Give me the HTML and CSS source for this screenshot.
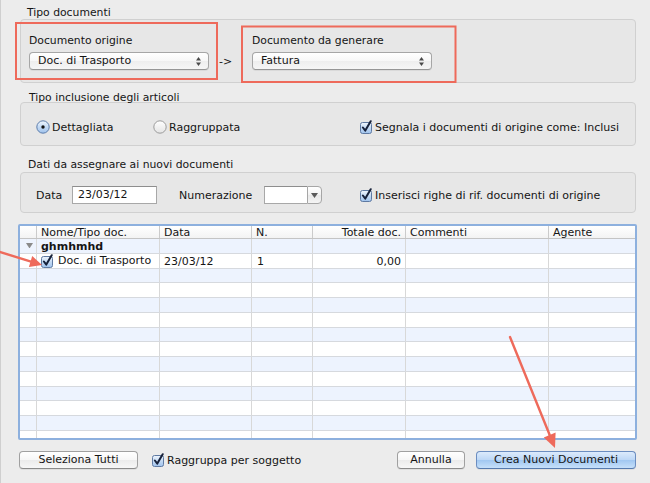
FILE: index.html
```html
<!DOCTYPE html>
<html lang="it">
<head>
<meta charset="utf-8">
<title>Genera documenti</title>
<link rel="stylesheet" href="styles.css">
</head>
<body>
<svg class="defs" aria-hidden="true">
  <defs>
    <linearGradient id="gBlue" x1="0" y1="0" x2="0" y2="1">
      <stop offset="0" stop-color="#f0f6fd"/>
      <stop offset="0.5" stop-color="#c4daf4"/>
      <stop offset="1" stop-color="#9fc2ec"/>
    </linearGradient>
    <linearGradient id="gWhite" x1="0" y1="0" x2="0" y2="1">
      <stop offset="0" stop-color="#ffffff"/>
      <stop offset="1" stop-color="#e4e4e4"/>
    </linearGradient>
    <symbol id="cb" viewBox="0 0 14 14">
      <rect x="1.5" y="2.5" width="11" height="11" rx="2" fill="url(#gBlue)" stroke="#5f7aa2"/>
      <path d="M3.9 7.5 L6.3 10.6 L11.7 1.2" fill="none" stroke="#16213a" stroke-width="2" stroke-linecap="round" stroke-linejoin="round"/>
    </symbol>
    <symbol id="radOn" viewBox="0 0 14 14">
      <circle cx="7" cy="7" r="6.2" fill="url(#gBlue)" stroke="#5d7dab"/>
      <circle cx="7" cy="7" r="1.7" fill="#111"/>
    </symbol>
    <symbol id="radOff" viewBox="0 0 14 14">
      <circle cx="7" cy="7" r="6.2" fill="url(#gWhite)" stroke="#9b9b9b"/>
    </symbol>
    <symbol id="updown" viewBox="0 0 5 9">
      <polygon points="0,3.5 2.5,0 5,3.5" fill="#4a4a4a"/>
      <polygon points="0,5.5 2.5,9 5,5.5" fill="#4a4a4a"/>
    </symbol>
  </defs>
</svg>

<div class="window">
  <div class="legend l1">Tipo documenti</div>
  <div class="group g1">
    <div class="field">
      <div class="flabel">Documento origine</div>
      <div class="popup"><span>Doc. di Trasporto</span><svg class="ud" width="5" height="9"><use href="#updown"/></svg></div>
    </div>
    <div class="arrowtxt">-&gt;</div>
    <div class="field">
      <div class="flabel">Documento da generare</div>
      <div class="popup"><span>Fattura</span><svg class="ud" width="5" height="9"><use href="#updown"/></svg></div>
    </div>
  </div>

  <div class="legend l2">Tipo inclusione degli articoli</div>
  <div class="group g2">
    <div class="opt opt1"><svg class="ico" width="14" height="14"><use href="#radOn"/></svg><span>Dettagliata</span></div>
    <div class="opt opt2"><svg class="ico" width="14" height="14"><use href="#radOff"/></svg><span>Raggruppata</span></div>
    <div class="opt"><svg class="ico" width="14" height="14"><use href="#cb"/></svg><span>Segnala i documenti di origine come: Inclusi</span></div>
  </div>

  <div class="legend l3">Dati da assegnare ai nuovi documenti</div>
  <div class="group g3">
    <span class="lbl-data">Data</span>
    <div class="input date">23/03/12</div>
    <span class="lbl-num">Numerazione</span>
    <div class="combo"><div class="combo-field"></div><div class="combo-btn"><svg width="7" height="5"><polygon points="0,0 7,0 3.5,5" fill="#5a5a5a"/></svg></div></div>
    <div class="opt opt-ins"><svg class="ico" width="14" height="14"><use href="#cb"/></svg><span>Inserisci righe di rif. documenti di origine</span></div>
  </div>

  <div class="tbl">
    <div class="row thead">
      <div class="c"></div>
      <div class="c">Nome/Tipo doc.</div>
      <div class="c">Data</div>
      <div class="c">N.</div>
      <div class="c r">Totale doc.</div>
      <div class="c">Commenti</div>
      <div class="c">Agente</div>
    </div>
    <div class="tbody">
      <div class="row alt">
        <div class="c tri"><svg width="7" height="5"><polygon points="0,0 7,0 3.5,5.5" fill="#8a8a8a"/></svg></div>
        <div class="c b">ghmhmhd</div>
        <div class="c"></div><div class="c"></div><div class="c"></div><div class="c"></div><div class="c"></div>
      </div>
      <div class="row">
        <div class="c"></div>
        <div class="c doc"><svg class="ico" width="14" height="14"><use href="#cb"/></svg><span>Doc. di Trasporto</span></div>
        <div class="c">23/03/12</div>
        <div class="c n">1</div>
        <div class="c r">0,00</div>
        <div class="c"></div><div class="c"></div>
      </div>
      <div class="row alt"><div class="c"></div><div class="c"></div><div class="c"></div><div class="c"></div><div class="c"></div><div class="c"></div><div class="c"></div></div>
      <div class="row"><div class="c"></div><div class="c"></div><div class="c"></div><div class="c"></div><div class="c"></div><div class="c"></div><div class="c"></div></div>
      <div class="row alt"><div class="c"></div><div class="c"></div><div class="c"></div><div class="c"></div><div class="c"></div><div class="c"></div><div class="c"></div></div>
      <div class="row"><div class="c"></div><div class="c"></div><div class="c"></div><div class="c"></div><div class="c"></div><div class="c"></div><div class="c"></div></div>
      <div class="row alt"><div class="c"></div><div class="c"></div><div class="c"></div><div class="c"></div><div class="c"></div><div class="c"></div><div class="c"></div></div>
      <div class="row"><div class="c"></div><div class="c"></div><div class="c"></div><div class="c"></div><div class="c"></div><div class="c"></div><div class="c"></div></div>
      <div class="row alt"><div class="c"></div><div class="c"></div><div class="c"></div><div class="c"></div><div class="c"></div><div class="c"></div><div class="c"></div></div>
      <div class="row"><div class="c"></div><div class="c"></div><div class="c"></div><div class="c"></div><div class="c"></div><div class="c"></div><div class="c"></div></div>
      <div class="row alt"><div class="c"></div><div class="c"></div><div class="c"></div><div class="c"></div><div class="c"></div><div class="c"></div><div class="c"></div></div>
      <div class="row"><div class="c"></div><div class="c"></div><div class="c"></div><div class="c"></div><div class="c"></div><div class="c"></div><div class="c"></div></div>
      <div class="row alt"><div class="c"></div><div class="c"></div><div class="c"></div><div class="c"></div><div class="c"></div><div class="c"></div><div class="c"></div></div>
      <div class="row"><div class="c"></div><div class="c"></div><div class="c"></div><div class="c"></div><div class="c"></div><div class="c"></div><div class="c"></div></div>
      <div class="row alt"><div class="c"></div><div class="c"></div><div class="c"></div><div class="c"></div><div class="c"></div><div class="c"></div><div class="c"></div></div>
    </div>
  </div>

  <div class="footer">
    <div class="btn sel">Seleziona Tutti</div>
    <div class="opt opt-rag"><svg class="ico" width="14" height="14"><use href="#cb"/></svg><span>Raggruppa per soggetto</span></div>
    <div class="btn annulla">Annulla</div>
    <div class="btn primary">Crea Nuovi Documenti</div>
  </div>

  <svg class="annot" width="650" height="483" viewBox="0 0 650 483" aria-hidden="true">
    <g fill="none" stroke="#ee6a5b" stroke-width="2">
      <rect x="16" y="23" width="201" height="56"/>
      <rect x="242" y="26.5" width="213.5" height="55.5"/>
    </g>
    <g stroke="#ee6a5b" stroke-width="2.4" stroke-linecap="round">
      <line x1="-2" y1="251.4" x2="31" y2="261.6"/>
      <line x1="510" y1="337" x2="549.7" y2="435"/>
    </g>
    <g fill="#ee6a5b">
      <polygon points="42,265 28.9,266.9 32.2,256"/>
      <polygon points="555,448 543.8,437.4 555.6,432.6"/>
    </g>
  </svg>
</div>
</body>
</html>
```

FILE: styles.css
```css
html, body {
  margin: 0;
  padding: 0;
}

body {
  background: #ececec;
  font-family: "DejaVu Sans", "Noto Sans", sans-serif;
  font-size: 10.8px;
  color: #151515;
}

.defs {
  display: block;
  width: 0;
  height: 0;
  overflow: hidden;
}

.window {
  position: relative;
  width: 650px;
  height: 483px;
  box-sizing: border-box;
  padding: 6px 14px 0 20px;
  overflow: hidden;
  box-shadow: inset 1px 0 0 #cfcfcf;
}

.legend {
  line-height: 13px;
  height: 13px;
  white-space: nowrap;
}
.l1 { padding-left: 7px; }
.l2 { padding-left: 9px; margin-top: 8px; height: 11px; }
.l3 { padding-left: 8px; margin-top: 12px; height: 14px; }

.group {
  box-sizing: border-box;
  border: 1px solid #d0d0d0;
  border-radius: 4px;
  background: #e7e7e7;
  display: flex;
}

.g1 {
  height: 64px;
  padding: 14px 0 0 8px;
  align-items: flex-start;
}

.field {
  display: flex;
  flex-direction: column;
}
.flabel {
  line-height: 13px;
  height: 13px;
  margin-bottom: 5px;
  white-space: nowrap;
}

.popup {
  box-sizing: border-box;
  width: 180px;
  height: 18px;
  border: 1px solid #a6a6a6;
  border-bottom-color: #969696;
  border-radius: 4px;
  background: linear-gradient(#ffffff, #f7f7f7 50%, #eeeeee 51%, #f6f6f6);
  box-shadow: 0 1px 0 rgba(0,0,0,0.06);
  display: flex;
  align-items: center;
  justify-content: space-between;
  padding: 0 7px 0 8px;
  line-height: 16px;
  font-size: 11px;
}
.ud { display: block; }

.arrowtxt {
  width: 33px;
  margin-left: 10px;
  margin-top: 19px;
  line-height: 18px;
  height: 18px;
  font-size: 11px;
}

.g2 {
  height: 44px;
  padding: 6px 0 0 15px;
  align-items: center;
}

.opt {
  display: flex;
  align-items: center;
  white-space: nowrap;
  font-size: 11px;
}
.opt .ico { display: block; flex: none; margin-right: 2px; }
.opt1 { width: 117px; }
.opt2 { width: 206px; }

.g3 {
  height: 41px;
  padding: 5px 0 0 15px;
  align-items: center;
}
.lbl-data { width: 36px; font-size: 11px; }
.input {
  box-sizing: border-box;
  height: 18px;
  border: 1px solid #a8a8a8;
  border-top-color: #8e8e8e;
  background: #fff;
  line-height: 16px;
  font-size: 11px;
}
.date { width: 85px; padding-left: 5px; }
.lbl-num { width: 85px; margin-left: 22px; font-size: 11px; }

.combo {
  display: flex;
  width: 58px;
  height: 18px;
}
.combo-field {
  flex: 1;
  box-sizing: border-box;
  border: 1px solid #a8a8a8;
  border-top-color: #8e8e8e;
  border-right: none;
  background: #fff;
}
.combo-btn {
  width: 15px;
  box-sizing: border-box;
  border: 1px solid #a6a6a6;
  border-radius: 0 4px 4px 0;
  background: linear-gradient(#ffffff, #f2f2f2 50%, #e8e8e8 51%, #f4f4f4);
  display: flex;
  align-items: center;
  justify-content: center;
}
.combo-btn svg { display: block; }
.opt-ins { margin-left: 37px; }

/* table */
.tbl {
  margin: 11px -1px 0 -2px;
  height: 216px;
  box-sizing: border-box;
  border: 2px solid #8db0de;
  border-radius: 2px;
  background: #fff;
  overflow: hidden;
  font-size: 11px;
}
.row {
  display: grid;
  grid-template-columns: 17px 123px 92px 61px 93px 143px 86px;
  box-sizing: border-box;
  height: 14.75px;
  border-bottom: 1px solid #d6d9de;
}
.row .c {
  border-right: 1px solid #d8d8d8;
  padding-left: 4px;
  white-space: nowrap;
  overflow: hidden;
  line-height: 15px;
}
.row .c:last-child { border-right: none; }
.row .c.r { text-align: right; padding: 0 4px 0 0; }
.row .c.n { padding-left: 5px; }

.thead {
  height: 13px;
  background: linear-gradient(#ffffff, #f3f3f3);
  border-bottom: 1px solid #c4c4c4;
}
.thead .c {
  border-right-color: #cbcbcb;
  line-height: 13px;
}

.alt { background: #edf3fe; }

.c.tri {
  display: flex;
  align-items: center;
  padding-left: 6px;
}
.c.tri svg { display: block; }
.c.b { font-weight: bold; }
.c.doc {
  display: flex;
  align-items: center;
  padding-left: 3px;
}
.c.doc .ico { display: block; margin-right: 4px; flex: none; }

/* footer */
.footer {
  display: flex;
  align-items: center;
  margin-top: 11px;
  height: 18px;
}
.btn {
  box-sizing: border-box;
  height: 18px;
  border: 1px solid #a0a0a0;
  border-bottom-color: #8a8a8a;
  border-radius: 4px;
  background: linear-gradient(#ffffff, #f6f6f6 50%, #ebebeb 51%, #f7f7f7);
  box-shadow: 0 1px 0 rgba(0,0,0,0.06);
  text-align: center;
  line-height: 16px;
  font-size: 11px;
  white-space: nowrap;
}
.sel { width: 119px; margin-left: -1px; }
.opt-rag { margin-left: 13px; }
.annulla { width: 68px; margin-left: auto; }
.primary {
  width: 160px;
  margin-left: 11px;
  border-color: #6b8dc0;
  border-bottom-color: #557aae;
  background: linear-gradient(#dcebfc, #bcd7f6 50%, #a0c7f1 51%, #c6e0fa);
}

.annot {
  position: absolute;
  left: 0;
  top: 0;
  pointer-events: none;
}
```
